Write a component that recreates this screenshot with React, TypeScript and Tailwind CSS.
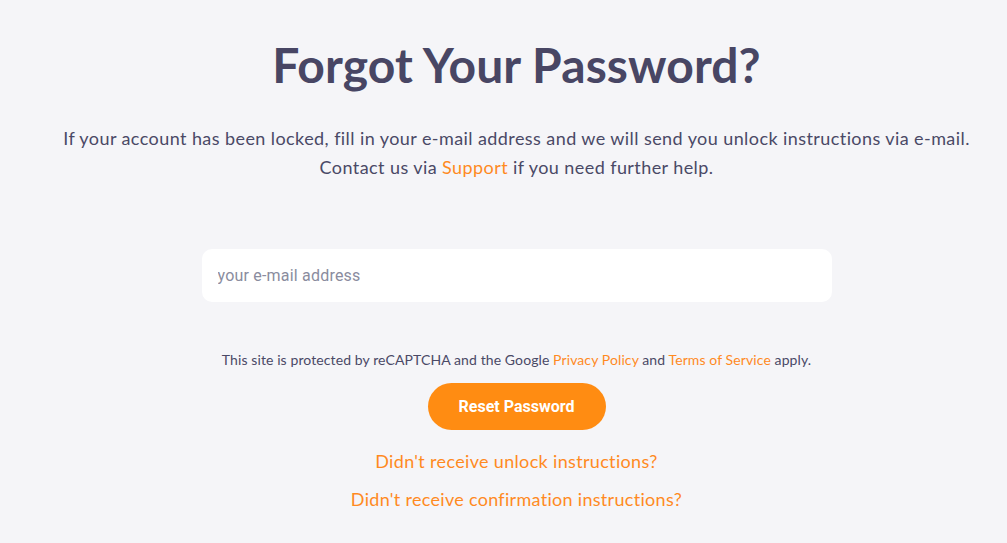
export default function App() {
  return (
    <div className="min-h-[543px] w-full bg-[#f5f5f8] pl-[26px] font-['Lato','Noto_Sans',sans-serif] text-[#4a4966]">
      <div className="flex flex-col items-center pt-[36px]">
        <h1 className="text-[48px] font-bold leading-[58px] tracking-[0.1px] text-[#484664]">Forgot Your Password?</h1>

        <div className="mt-[30px] text-center text-[18px] leading-[29px] tracking-[0.42px]">
          <p>If your account has been locked, fill in your e-mail address and we will send you unlock instructions via e-mail.</p>
          <p>
            Contact us via <a className="text-[#ff8a1f]">Support</a> if you need further help.
          </p>
        </div>

        <input
          type="email"
          placeholder="your e-mail address"
          className="mt-[67px] h-[53px] w-[630px] rounded-[10px] bg-white px-4 font-['Roboto',sans-serif] text-[16px] tracking-[0.2px] text-[#4a4966] outline-none placeholder:text-[#8a8c9e]"
        />

        <p className="mt-[49px] text-[14px] leading-[18px] tracking-[0.1px]">
          This site is protected by reCAPTCHA and the Google <a className="text-[#ff8a1f]">Privacy Policy</a> and{" "}
          <a className="text-[#ff8a1f]">Terms of Service</a> apply.
        </p>

        <button className="mt-[14px] h-[47px] w-[178px] rounded-full bg-[#ff8c12] font-['Roboto',sans-serif] text-[16px] font-bold text-white">
          Reset Password
        </button>

        <a className="mt-[18px] text-[18px] leading-[27px] tracking-[0.33px] text-[#ff8a1f]">Didn't receive unlock instructions?</a>
        <a className="mt-[11px] text-[18px] leading-[27px] tracking-[0.3px] text-[#ff8a1f]">Didn't receive confirmation instructions?</a>
      </div>
    </div>
  );
}
